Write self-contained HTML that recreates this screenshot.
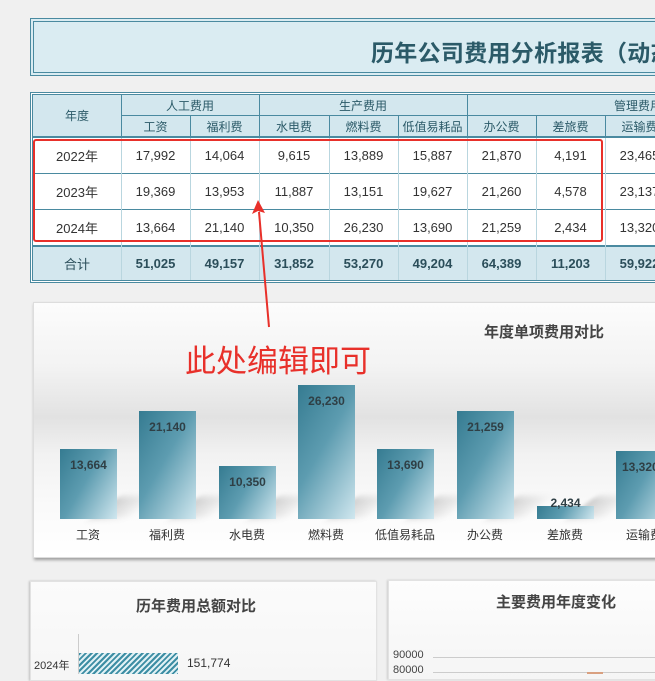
<!DOCTYPE html><html><head><meta charset="utf-8"><style>
*{margin:0;padding:0;box-sizing:border-box}
body{width:655px;height:674px;overflow:hidden;background:#f0f0f0;font-family:"Liberation Sans","Noto Sans CJK SC",sans-serif;position:relative}
.a{position:absolute}
.tb{left:30px;top:18px;width:640px;height:58px;border:1px solid #4a8aa0;background:#daecf2}
.tb .in{position:absolute;left:2px;top:2px;right:2px;bottom:2px;border:1px solid #4a8aa0}
.tt{left:371px;top:34px;font-size:23px;font-weight:bold;color:#2b5a68;white-space:nowrap;letter-spacing:0.3px}
.c{position:absolute;display:flex;align-items:center;justify-content:center;font-size:13px;color:#333;white-space:nowrap}
.hd{font-size:12px}
.h{background:#d3e7ee;color:#2b5a68}
.bold{font-weight:bold;color:#2b4e5a}
.bar{position:absolute;width:57px;background:linear-gradient(120deg,#357b91 0%,#5d9cb0 45%,#d0e7ef 100%);display:flex;justify-content:center;padding-top:9px;font-size:12px;font-weight:bold;color:#2f3f45}
.sh{position:absolute;height:22px;width:40px;background:linear-gradient(to right,rgba(0,0,0,.18),rgba(0,0,0,0));transform:skewX(-50deg);filter:blur(3px)}
.lb{position:absolute;top:526px;width:80px;text-align:center;font-size:12px;color:#333}
</style></head><body>
<div class="a tb"><div class="in"></div></div>
<div class="a tt">历年公司费用分析报表（动态</div>

<div class="a" style="left:30px;top:92px;width:640px;height:191px;border:1px solid #4a8aa0;background:#fff"></div>
<div class="a" style="left:32px;top:94px;width:640px;height:187px;border:1px solid #4a8aa0"></div>
<div class="a h" style="left:33px;top:95px;width:640px;height:41px"></div>
<div class="a" style="left:33px;top:136px;width:640px;height:2px;background:#4a8aa0"></div>
<div class="a h" style="left:33px;top:245px;width:640px;height:35px;border-top:2px solid #4a8aa0"></div>
<div class="a" style="left:121px;top:115px;width:560px;height:1px;background:#4a8aa0"></div>
<div class="a" style="left:121px;top:95px;width:1px;height:41px;background:#4a8aa0"></div>
<div class="a" style="left:259px;top:95px;width:1px;height:41px;background:#4a8aa0"></div>
<div class="a" style="left:467px;top:95px;width:1px;height:41px;background:#4a8aa0"></div>
<div class="a" style="left:190px;top:115px;width:1px;height:21px;background:#4a8aa0"></div>
<div class="a" style="left:329px;top:115px;width:1px;height:21px;background:#4a8aa0"></div>
<div class="a" style="left:398px;top:115px;width:1px;height:21px;background:#4a8aa0"></div>
<div class="a" style="left:536px;top:115px;width:1px;height:21px;background:#4a8aa0"></div>
<div class="a" style="left:605px;top:115px;width:1px;height:21px;background:#4a8aa0"></div>
<div class="a" style="left:33px;top:173px;width:640px;height:1px;background:#4a8aa0"></div>
<div class="a" style="left:33px;top:209px;width:640px;height:1px;background:#4a8aa0"></div>
<div class="a" style="left:121px;top:138px;width:1px;height:142px;background:#b9d6df"></div>
<div class="a" style="left:190px;top:138px;width:1px;height:142px;background:#b9d6df"></div>
<div class="a" style="left:259px;top:138px;width:1px;height:142px;background:#b9d6df"></div>
<div class="a" style="left:329px;top:138px;width:1px;height:142px;background:#b9d6df"></div>
<div class="a" style="left:398px;top:138px;width:1px;height:142px;background:#b9d6df"></div>
<div class="a" style="left:467px;top:138px;width:1px;height:142px;background:#b9d6df"></div>
<div class="a" style="left:536px;top:138px;width:1px;height:142px;background:#b9d6df"></div>
<div class="a" style="left:605px;top:138px;width:1px;height:142px;background:#b9d6df"></div>

<div class="c hd" style="left:33px;top:95px;width:88px;height:41px;color:#2b5a68">年度</div>
<div class="c hd" style="left:121px;top:95px;width:138px;height:20px;color:#2b5a68">人工费用</div>
<div class="c hd" style="left:259px;top:95px;width:208px;height:20px;color:#2b5a68">生产费用</div>
<div class="c hd" style="left:614px;top:95px;width:60px;height:20px;color:#2b5a68;justify-content:flex-start">管理费用</div>
<div class="c hd" style="left:121px;top:116px;width:69px;height:20px;color:#2b5a68">工资</div>
<div class="c hd" style="left:190px;top:116px;width:69px;height:20px;color:#2b5a68">福利费</div>
<div class="c hd" style="left:259px;top:116px;width:70px;height:20px;color:#2b5a68">水电费</div>
<div class="c hd" style="left:329px;top:116px;width:69px;height:20px;color:#2b5a68">燃料费</div>
<div class="c hd" style="left:398px;top:116px;width:69px;height:20px;color:#2b5a68">低值易耗品</div>
<div class="c hd" style="left:467px;top:116px;width:69px;height:20px;color:#2b5a68">办公费</div>
<div class="c hd" style="left:536px;top:116px;width:69px;height:20px;color:#2b5a68">差旅费</div>
<div class="c hd" style="left:605px;top:116px;width:69px;height:20px;color:#2b5a68">运输费</div>

<div class="c" style="left:33px;top:138px;width:88px;height:35px">2022年</div>
<div class="c" style="left:121px;top:138px;width:69px;height:35px">17,992</div>
<div class="c" style="left:190px;top:138px;width:69px;height:35px">14,064</div>
<div class="c" style="left:259px;top:138px;width:70px;height:35px">9,615</div>
<div class="c" style="left:329px;top:138px;width:69px;height:35px">13,889</div>
<div class="c" style="left:398px;top:138px;width:69px;height:35px">15,887</div>
<div class="c" style="left:467px;top:138px;width:69px;height:35px">21,870</div>
<div class="c" style="left:536px;top:138px;width:69px;height:35px">4,191</div>
<div class="c" style="left:605px;top:138px;width:69px;height:35px">23,465</div>

<div class="c" style="left:33px;top:174px;width:88px;height:35px">2023年</div>
<div class="c" style="left:121px;top:174px;width:69px;height:35px">19,369</div>
<div class="c" style="left:190px;top:174px;width:69px;height:35px">13,953</div>
<div class="c" style="left:259px;top:174px;width:70px;height:35px">11,887</div>
<div class="c" style="left:329px;top:174px;width:69px;height:35px">13,151</div>
<div class="c" style="left:398px;top:174px;width:69px;height:35px">19,627</div>
<div class="c" style="left:467px;top:174px;width:69px;height:35px">21,260</div>
<div class="c" style="left:536px;top:174px;width:69px;height:35px">4,578</div>
<div class="c" style="left:605px;top:174px;width:69px;height:35px">23,137</div>

<div class="c" style="left:33px;top:210px;width:88px;height:35px">2024年</div>
<div class="c" style="left:121px;top:210px;width:69px;height:35px">13,664</div>
<div class="c" style="left:190px;top:210px;width:69px;height:35px">21,140</div>
<div class="c" style="left:259px;top:210px;width:70px;height:35px">10,350</div>
<div class="c" style="left:329px;top:210px;width:69px;height:35px">26,230</div>
<div class="c" style="left:398px;top:210px;width:69px;height:35px">13,690</div>
<div class="c" style="left:467px;top:210px;width:69px;height:35px">21,259</div>
<div class="c" style="left:536px;top:210px;width:69px;height:35px">2,434</div>
<div class="c" style="left:605px;top:210px;width:69px;height:35px">13,320</div>

<div class="c bold" style="left:33px;top:247px;width:88px;height:33px;font-weight:normal">合计</div>
<div class="c bold" style="left:121px;top:247px;width:69px;height:33px">51,025</div>
<div class="c bold" style="left:190px;top:247px;width:69px;height:33px">49,157</div>
<div class="c bold" style="left:259px;top:247px;width:70px;height:33px">31,852</div>
<div class="c bold" style="left:329px;top:247px;width:69px;height:33px">53,270</div>
<div class="c bold" style="left:398px;top:247px;width:69px;height:33px">49,204</div>
<div class="c bold" style="left:467px;top:247px;width:69px;height:33px">64,389</div>
<div class="c bold" style="left:536px;top:247px;width:69px;height:33px">11,203</div>
<div class="c bold" style="left:605px;top:247px;width:69px;height:33px">59,922</div>

<div class="a" style="left:33px;top:139px;width:570px;height:103px;border:2px solid #e8302a;border-radius:3px"></div>

<div class="a" style="left:33px;top:302px;width:640px;height:256px;background:linear-gradient(#fcfcfc 0%,#f3f3f3 25%,#e2e2e2 45%,#f2f2f2 60%,#fafafa 80%,#fff 100%);box-shadow:1px 2px 3px rgba(0,0,0,.35);border:1px solid #ddd"></div>
<div class="a" style="left:484px;top:321px;font-size:15px;font-weight:bold;color:#444">年度单项费用对比</div>
<div class="a" style="left:185px;top:336px;font-size:31px;color:#e8302a;white-space:nowrap">此处编辑即可</div>

<div class="sh" style="left:104px;top:497px"></div>
<div class="sh" style="left:184px;top:497px"></div>
<div class="sh" style="left:263px;top:497px"></div>
<div class="sh" style="left:342px;top:497px"></div>
<div class="sh" style="left:421px;top:497px"></div>
<div class="sh" style="left:501px;top:497px"></div>
<div class="sh" style="left:581px;top:497px"></div>

<div class="bar" style="left:60px;top:449px;height:70px">13,664</div>
<div class="bar" style="left:139px;top:411px;height:108px">21,140</div>
<div class="bar" style="left:219px;top:466px;height:53px">10,350</div>
<div class="bar" style="left:298px;top:385px;height:134px">26,230</div>
<div class="bar" style="left:377px;top:449px;height:70px">13,690</div>
<div class="bar" style="left:457px;top:411px;height:108px">21,259</div>
<div class="bar" style="left:537px;top:506px;height:13px;padding-top:0"></div>
<div class="a" style="left:537px;top:496px;width:57px;text-align:center;font-size:12px;font-weight:bold;color:#2f3f45">2,434</div>
<div class="bar" style="left:616px;top:451px;height:68px;justify-content:flex-start;padding-left:6px">13,320</div>

<div class="lb" style="left:48px">工资</div>
<div class="lb" style="left:127px">福利费</div>
<div class="lb" style="left:207px">水电费</div>
<div class="lb" style="left:286px">燃料费</div>
<div class="lb" style="left:365px">低值易耗品</div>
<div class="lb" style="left:445px">办公费</div>
<div class="lb" style="left:525px">差旅费</div>
<div class="lb" style="left:604px">运输费</div>

<svg class="a" style="left:0;top:0" width="655" height="674">
<path d="M269 327 L259 212" stroke="#e8302a" stroke-width="2" fill="none"/>
<path d="M258 200 L252 214 L258 211 L265 213 Z" fill="#e8302a"/>
</svg>

<div class="a" style="left:30px;top:581px;width:347px;height:100px;background:linear-gradient(#fbfbfb,#f6f6f6);box-shadow:-1px 0 2px rgba(0,0,0,.2);border:1px solid #e2e2e2"></div>
<div class="a" style="left:136px;top:595px;font-size:15px;font-weight:bold;color:#444">历年费用总额对比</div>
<div class="a" style="left:78px;top:634px;width:1px;height:40px;background:#ccc"></div>
<div class="a" style="left:79px;top:653px;width:99px;height:21px;background:repeating-linear-gradient(135deg,#3d8ea4 0 2px,#dff0f4 2px 4px)"></div>
<div class="a" style="left:34px;top:657px;font-size:11px;color:#333">2024年</div>
<div class="a" style="left:187px;top:656px;font-size:12px;color:#333">151,774</div>

<div class="a" style="left:388px;top:580px;width:290px;height:100px;background:linear-gradient(#fdfdfd,#f5f5f5);border:1px solid #e2e2e2;box-shadow:-1px 0 2px rgba(0,0,0,.15)"></div>
<div class="a" style="left:496px;top:591px;font-size:15px;font-weight:bold;color:#444">主要费用年度变化</div>
<div class="a" style="left:393px;top:649px;font-size:11px;color:#444">90000</div>
<div class="a" style="left:393px;top:664px;font-size:11px;color:#444">80000</div>
<div class="a" style="left:433px;top:657px;width:230px;height:1px;background:#ccc"></div>
<div class="a" style="left:433px;top:672px;width:230px;height:1px;background:#ccc"></div>
<div class="a" style="left:587px;top:672px;width:16px;height:2px;background:#d9a080"></div>
</body></html>
